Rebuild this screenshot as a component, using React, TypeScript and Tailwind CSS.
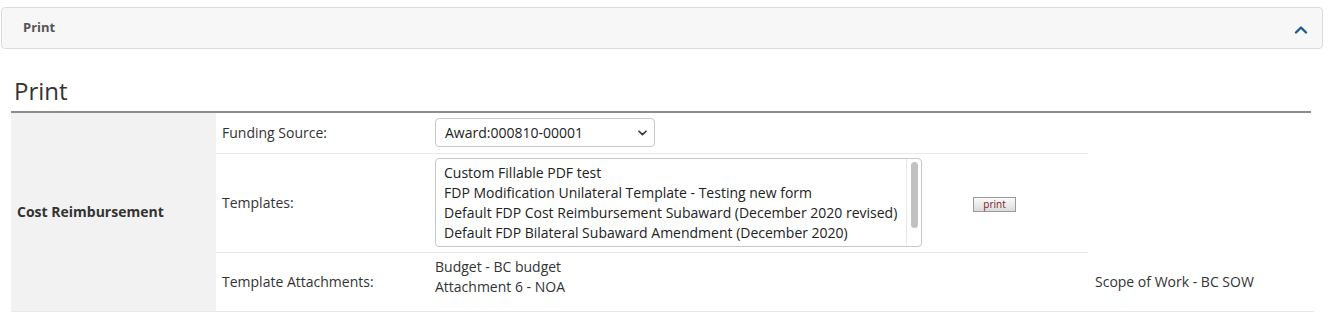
import React from "react";

const templates = [
  "Custom Fillable PDF test",
  "FDP Modification Unilateral Template - Testing new form",
  "Default FDP Cost Reimbursement Subaward (December 2020 revised)",
  "Default FDP Bilateral Subaward Amendment (December 2020)",
];

export default function App() {
  return (
    <main className="min-h-screen bg-white text-[#222] font-['Open_Sans',sans-serif]">
      {/* collapsible panel header */}
      <div className="pt-[7px] pl-[1px] pr-[8px]">
        <div className="h-[42px] bg-[#f7f7f7] border border-[#dcdcdc] rounded-[4px] flex items-center justify-between pl-[21px] pr-[14px]">
          <span className="text-[13px] font-bold text-[#555]">Print</span>
          <svg width="14" height="9" viewBox="0 0 14 9" className="mt-[3px]">
            <path d="M2 7.5 L7 2.5 L12 7.5" fill="none" stroke="#1f5a94" strokeWidth="2.4" strokeLinecap="round" strokeLinejoin="round" />
          </svg>
        </div>
      </div>

      {/* section title */}
      <div className="pl-[11px] pr-[20px] mt-[27px]">
        <h2 className="text-[24px] leading-[30px] text-[#333] pl-[3px] pb-[5px] border-b-2 border-[#8c8c8c]">Print</h2>

        <table className="table-fixed w-[1303px] border-collapse text-[14px] text-[#333]">
          <colgroup>
            <col className="w-[205px]" />
            <col className="w-[213px]" />
            <col className="w-[492px]" />
            <col className="w-[167px]" />
            <col className="w-[226px]" />
          </colgroup>
          <tbody>
            <tr>
              <td rowSpan={3} className="bg-[#f2f2f2] border-b border-[#e8e8e8] pl-[6px] font-bold align-middle">
                Cost Reimbursement
              </td>
              <td className="h-[40px] pl-[6px] border-b border-[#e8e8e8]">Funding Source:</td>
              <td className="pl-[6px] border-b border-[#e8e8e8]">
                <div className="w-[220px] h-[29px] border border-[#c8c8c8] rounded-[4px] flex items-center justify-between pl-[9px] pr-[7px]">
                  <span className="text-[14px] text-[#222]">Award:000810-00001</span>
                  <svg width="9" height="6" viewBox="0 0 9 6">
                    <path d="M1 1.2 L4.5 4.6 L8 1.2" fill="none" stroke="#333" strokeWidth="1.6" strokeLinecap="round" strokeLinejoin="round" />
                  </svg>
                </div>
              </td>
              <td className="border-b border-[#e8e8e8]"></td>
            </tr>
            <tr>
              <td className="h-[99px] pl-[6px] border-b border-[#e8e8e8]">Templates:</td>
              <td className="pl-[6px] border-b border-[#e8e8e8]">
                <div className="w-[487px] h-[89px] border border-[#c8c8c8] rounded-[4px] flex">
                  <ul className="flex-1 pl-[8px] pt-[4px] text-[14px] leading-[20px] text-[#222] overflow-hidden">
                    {templates.map((t) => (
                      <li key={t} className="whitespace-nowrap">{t}</li>
                    ))}
                  </ul>
                  <div className="w-[15px] border-l border-[#e6e6e6] flex justify-center pt-[3px]">
                    <div className="w-[7px] h-[66px] bg-[#c1c1c1] rounded-full"></div>
                  </div>
                </div>
              </td>
              <td className="border-b border-[#e8e8e8] pl-[52px]">
                <button className="w-[43px] h-[15px] border border-[#9a9a9a] bg-gradient-to-b from-[#fafafa] to-[#dcdcdc] text-[10px] leading-[12px] text-[#7a1c1c]">
                  print
                </button>
              </td>
            </tr>
            <tr>
              <td className="h-[59px] pl-[6px] border-b border-[#e8e8e8]">Template Attachments:</td>
              <td className="pl-[6px] border-b border-[#e8e8e8] leading-[20px]">
                <div>Budget - BC budget</div>
                <div>Attachment 6 - NOA</div>
                <div className="h-[10px]"></div>
              </td>
              <td className="border-b border-[#e8e8e8]"></td>
              <td className="pl-[7px] border-b border-[#e8e8e8]">Scope of Work - BC SOW</td>
            </tr>
          </tbody>
        </table>
      </div>
    </main>
  );
}
